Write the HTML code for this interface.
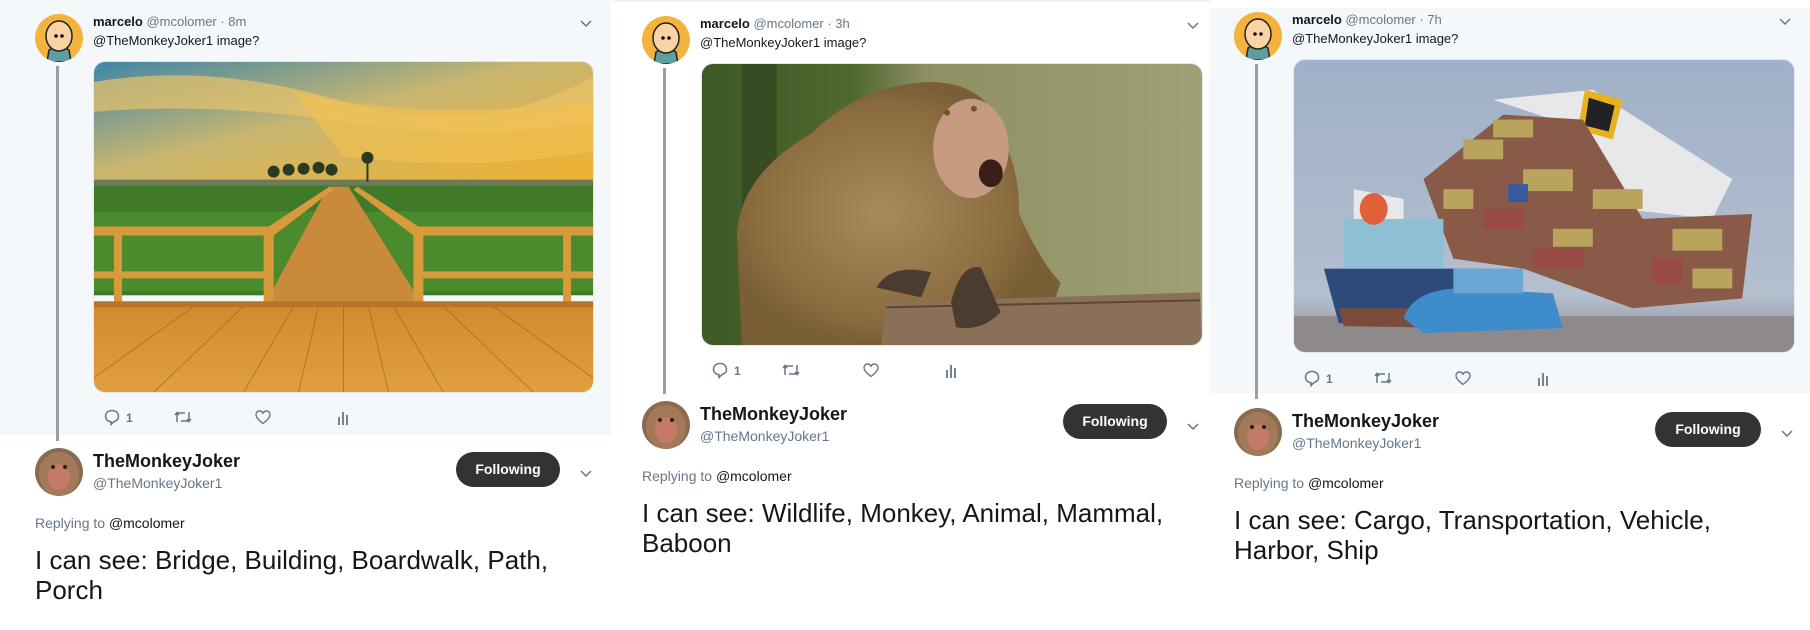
<!DOCTYPE html>
<html><head><meta charset="utf-8">
<style>
*{margin:0;padding:0;box-sizing:border-box}
body{width:1810px;height:630px;background:#fff;position:relative;overflow:hidden;font-family:"Liberation Sans",Arial,sans-serif;color:#14171a}
.bg{position:absolute;background:#f5f8fa}
.p{position:absolute;width:560px;height:600px}
.p>*{position:absolute}
.av{left:0;top:0;width:48px;height:48px;border-radius:50%;overflow:hidden}
.line{left:21px;width:3px;background:#9a9ea3;top:52px}
.hdr{left:58px;top:0;font-size:13px;line-height:16px;color:#657786;white-space:nowrap}
.hdr b{color:#14171a}
.t2{left:58px;top:19px;font-size:13px;line-height:16px;white-space:nowrap}
.img{left:58px;top:47px;width:502px;border-radius:12px;overflow:hidden;border:1px solid #e1e8ed}
.img svg{display:block;width:100%;height:100%}
.act{left:68px;height:18px;width:260px}
.act svg{position:absolute;top:0}
.act span{position:absolute;left:23px;top:3px;font-size:12px;font-weight:bold;color:#657786}
.av2{left:0;width:48px;height:48px;border-radius:50%;overflow:hidden}
.n2{left:58px;font-size:18px;font-weight:bold;line-height:22px;white-space:nowrap}
.h2{left:58px;font-size:14px;line-height:18px;color:#657786;white-space:nowrap}
.btn{left:421px;width:104px;height:35px;border-radius:18px;background:#333;color:#fff;font-weight:bold;font-size:14px;text-align:center;line-height:35px}
.chev{left:544px}
.rep{left:0;font-size:14px;line-height:18px;color:#657786;white-space:nowrap}
.rep i{font-style:normal;color:#14171a}
.txt{left:0;font-size:26px;line-height:30px;width:560px;color:#14171a}
</style></head><body>
<div class="bg" style="left:0;top:0;width:611px;height:435px"></div>
<div class="bg" style="left:1209px;top:8px;width:601px;height:385px"></div>
<div style="position:absolute;left:614px;top:0;width:596px;height:2px;background:#eef1f4"></div>

<!-- reusable svgs via templates inline -->
<!-- PANEL 1 -->
<div class="p" style="left:35px;top:14px">
  <div class="av"><svg viewBox="0 0 48 48" width="48" height="48"><rect width="48" height="48" fill="#f3b33d"/><path d="M12 48 L14 36 Q24 30 34 36 L36 48Z" fill="#5f9ea0" stroke="#222" stroke-width="1.5"/><ellipse cx="24" cy="22" rx="13" ry="15" fill="#f9d3a3" stroke="#222" stroke-width="1.5"/><circle cx="21" cy="22" r="1.8" fill="#111"/><circle cx="27" cy="22" r="1.8" fill="#111"/></svg></div>
  <div class="line" style="height:375px"></div>
  <div class="hdr"><b>marcelo</b> @mcolomer · 8m</div>
  <div class="chev" style="top:2px"><svg width="14" height="10" viewBox="0 0 14 10"><path d="M2 2 L7 7 L12 2" fill="none" stroke="#657786" stroke-width="1.5"/></svg></div>
  <div class="t2">@TheMonkeyJoker1 image?</div>
  <div class="img" style="height:332px;width:501px">
    <svg viewBox="0 0 500 331" preserveAspectRatio="none">
      <defs>
        <linearGradient id="sky1" x1="0" y1="0" x2="1" y2="1"><stop offset="0" stop-color="#3f86a8"/><stop offset=".45" stop-color="#c8b670"/><stop offset="1" stop-color="#f2b12c"/></linearGradient>
        <linearGradient id="deck1" x1="0" y1="0" x2="0" y2="1"><stop offset="0" stop-color="#d08c2c"/><stop offset="1" stop-color="#e0a040"/></linearGradient>
      </defs>
      <rect width="500" height="125" fill="url(#sky1)"/>
      <path d="M0 20 Q120 0 250 40 T500 15 L500 60 Q380 80 250 60 T0 50Z" fill="#e9c36a" opacity=".7"/>
      <path d="M200 30 Q320 60 500 40 L500 90 Q380 110 250 95 Z" fill="#f4c24e" opacity=".6"/>
      <rect y="118" width="500" height="10" fill="#6f7a58"/>
      <rect y="124" width="500" height="110" fill="#3f7a28"/>
      <rect y="150" width="500" height="80" fill="#4c8a2e"/>
      <g fill="#2a3a20"><circle cx="180" cy="110" r="6"/><circle cx="195" cy="108" r="6"/><circle cx="210" cy="107" r="6"/><circle cx="225" cy="106" r="6"/><circle cx="238" cy="108" r="6"/><circle cx="274" cy="96" r="6"/><rect x="273" y="96" width="2" height="24"/></g>
      <path d="M0 302 L0 331 L500 331 L500 302 Z" fill="url(#deck1)"/>
      <path d="M0 245 L500 245 L500 331 L0 331Z" fill="url(#deck1)"/>
      <path d="M235 125 L255 125 L330 245 L170 245Z" fill="#c98a3c"/>
      <g fill="#d89a3a">
        <rect x="0" y="165" width="175" height="9"/><rect x="0" y="210" width="175" height="7"/>
        <rect x="325" y="165" width="175" height="9"/><rect x="325" y="210" width="175" height="7"/>
        <path d="M175 165 L236 125 L240 128 L180 174Z"/><path d="M325 165 L264 125 L260 128 L320 174Z"/>
        <rect x="170" y="165" width="10" height="80"/><rect x="320" y="165" width="10" height="80"/>
        <rect x="20" y="165" width="8" height="80"/><rect x="470" y="165" width="8" height="80"/>
      </g>
      <rect x="0" y="240" width="500" height="6" fill="#b87428"/>
      <g stroke="#9a5d1e" stroke-width="1" opacity=".6">
        <path d="M250 245 L250 331M200 245 L150 331M150 245 L60 331M100 245 L-20 331M300 245 L350 331M350 245 L440 331M400 245 L520 331M225 245 L205 331M275 245 L295 331"/>
      </g>
    </svg>
  </div>
  <div class="act" style="top:394px">
    <svg style="left:0" width="18" height="18" viewBox="0 0 18 18"><path d="M9 2.5C5 2.5 2.5 5 2.5 8.3c0 3 2.3 5.3 5.5 5.4v2.8l3-2.9c2.7-.8 4.5-2.7 4.5-5.3C15.5 5 13 2.5 9 2.5z" fill="none" stroke="#657786" stroke-width="1.5"/></svg>
    <span>1</span>
    <svg style="left:70px" width="20" height="18" viewBox="0 0 20 18"><path d="M4 14V5h8M2 7l2-2.5L6 7M16 4v9H8M14 11l2 2.5 2-2.5" fill="none" stroke="#657786" stroke-width="1.5"/></svg>
    <svg style="left:151px" width="18" height="18" viewBox="0 0 18 18"><path d="M9 15.5C4 11.5 2 9.3 2 6.5 2 4.3 3.7 3 5.6 3 7.2 3 8.3 4 9 5.2 9.7 4 10.8 3 12.4 3 14.3 3 16 4.3 16 6.5c0 2.8-2 5-7 9z" fill="none" stroke="#657786" stroke-width="1.4"/></svg>
    <svg style="left:232px" width="16" height="18" viewBox="0 0 16 18"><path d="M4 9v8M8 4v13M12 7v10" stroke="#657786" stroke-width="1.8"/></svg>
  </div>
  <div class="av2" style="top:434px"><svg viewBox="0 0 48 48" width="48" height="48"><rect width="48" height="48" fill="#8a6b50"/><ellipse cx="24" cy="26" rx="20" ry="22" fill="#a27a5a"/><ellipse cx="24" cy="29" rx="11" ry="13" fill="#c57a66"/><circle cx="18" cy="19" r="2" fill="#222"/><circle cx="30" cy="19" r="2" fill="#222"/></svg></div>
  <div class="n2" style="top:436px">TheMonkeyJoker</div>
  <div class="h2" style="top:460px">@TheMonkeyJoker1</div>
  <div class="btn" style="top:438px">Following</div>
  <div class="chev" style="top:452px"><svg width="14" height="10" viewBox="0 0 14 10"><path d="M2 2 L7 7 L12 2" fill="none" stroke="#657786" stroke-width="1.5"/></svg></div>
  <div class="rep" style="top:500px">Replying to <i>@mcolomer</i></div>
  <div class="txt" style="top:531px">I can see: Bridge, Building, Boardwalk, Path, Porch</div>
</div>

<!-- PANEL 2 -->
<div class="p" style="left:642px;top:16px">
  <div class="av"><svg viewBox="0 0 48 48" width="48" height="48"><rect width="48" height="48" fill="#f3b33d"/><path d="M12 48 L14 36 Q24 30 34 36 L36 48Z" fill="#5f9ea0" stroke="#222" stroke-width="1.5"/><ellipse cx="24" cy="22" rx="13" ry="15" fill="#f9d3a3" stroke="#222" stroke-width="1.5"/><circle cx="21" cy="22" r="1.8" fill="#111"/><circle cx="27" cy="22" r="1.8" fill="#111"/></svg></div>
  <div class="line" style="height:326px"></div>
  <div class="hdr"><b>marcelo</b> @mcolomer · 3h</div>
  <div class="chev" style="top:2px"><svg width="14" height="10" viewBox="0 0 14 10"><path d="M2 2 L7 7 L12 2" fill="none" stroke="#657786" stroke-width="1.5"/></svg></div>
  <div class="t2">@TheMonkeyJoker1 image?</div>
  <div class="img" style="height:283px;left:59px">
    <svg viewBox="0 0 502 283" preserveAspectRatio="none">
      <defs>
        <radialGradient id="mk" cx=".45" cy=".5" r=".5"><stop offset="0" stop-color="#a88a5c"/><stop offset=".8" stop-color="#8a6c3e"/><stop offset="1" stop-color="#7a5e36"/></radialGradient>
        <linearGradient id="bk2" x1="0" y1="0" x2="1" y2="0"><stop offset="0" stop-color="#3d5a25"/><stop offset=".3" stop-color="#50672f"/><stop offset=".45" stop-color="#8f8f66"/><stop offset="1" stop-color="#a0a074"/></linearGradient>
      </defs>
      <rect width="502" height="283" fill="url(#bk2)"/>
      <rect x="40" y="0" width="35" height="283" fill="#2f3f1e" opacity=".6"/>
      <path d="M40 283 L35 170 Q40 110 110 70 Q160 20 230 18 Q290 20 300 70 Q320 110 318 150 Q340 200 360 220 L340 283Z" fill="url(#mk)"/>
      <ellipse cx="270" cy="85" rx="38" ry="50" fill="#c59a80"/>
      <ellipse cx="290" cy="110" rx="12" ry="14" fill="#3a1e18"/>
      <circle cx="246" cy="49" r="3" fill="#6b5a20"/><circle cx="273" cy="45" r="3" fill="#6b5a20"/>
      <path d="M185 240 L500 230 L502 283 L180 283Z" fill="#8a7056"/>
      <path d="M185 245 L500 238" stroke="#5a4634" stroke-width="2"/>
      <path d="M250 240 Q260 200 280 205 L300 250 Q280 270 255 265Z" fill="#4a3c30"/>
      <path d="M175 225 Q190 200 230 210 L220 235Z" fill="#4a3c30"/>
    </svg>
  </div>
  <div class="act" style="top:345px;left:69px">
    <svg style="left:0" width="18" height="18" viewBox="0 0 18 18"><path d="M9 2.5C5 2.5 2.5 5 2.5 8.3c0 3 2.3 5.3 5.5 5.4v2.8l3-2.9c2.7-.8 4.5-2.7 4.5-5.3C15.5 5 13 2.5 9 2.5z" fill="none" stroke="#657786" stroke-width="1.5"/></svg>
    <span>1</span>
    <svg style="left:70px" width="20" height="18" viewBox="0 0 20 18"><path d="M4 14V5h8M2 7l2-2.5L6 7M16 4v9H8M14 11l2 2.5 2-2.5" fill="none" stroke="#657786" stroke-width="1.5"/></svg>
    <svg style="left:151px" width="18" height="18" viewBox="0 0 18 18"><path d="M9 15.5C4 11.5 2 9.3 2 6.5 2 4.3 3.7 3 5.6 3 7.2 3 8.3 4 9 5.2 9.7 4 10.8 3 12.4 3 14.3 3 16 4.3 16 6.5c0 2.8-2 5-7 9z" fill="none" stroke="#657786" stroke-width="1.4"/></svg>
    <svg style="left:232px" width="16" height="18" viewBox="0 0 16 18"><path d="M4 9v8M8 4v13M12 7v10" stroke="#657786" stroke-width="1.8"/></svg>
  </div>
  <div class="av2" style="top:385px"><svg viewBox="0 0 48 48" width="48" height="48"><rect width="48" height="48" fill="#8a6b50"/><ellipse cx="24" cy="26" rx="20" ry="22" fill="#a27a5a"/><ellipse cx="24" cy="29" rx="11" ry="13" fill="#c57a66"/><circle cx="18" cy="19" r="2" fill="#222"/><circle cx="30" cy="19" r="2" fill="#222"/></svg></div>
  <div class="n2" style="top:387px">TheMonkeyJoker</div>
  <div class="h2" style="top:411px">@TheMonkeyJoker1</div>
  <div class="btn" style="top:388px">Following</div>
  <div class="chev" style="top:403px"><svg width="14" height="10" viewBox="0 0 14 10"><path d="M2 2 L7 7 L12 2" fill="none" stroke="#657786" stroke-width="1.5"/></svg></div>
  <div class="rep" style="top:451px">Replying to <i>@mcolomer</i></div>
  <div class="txt" style="top:482px">I can see: Wildlife, Monkey, Animal, Mammal, Baboon</div>
</div>

<!-- PANEL 3 -->
<div class="p" style="left:1234px;top:12px">
  <div class="av"><svg viewBox="0 0 48 48" width="48" height="48"><rect width="48" height="48" fill="#f3b33d"/><path d="M12 48 L14 36 Q24 30 34 36 L36 48Z" fill="#5f9ea0" stroke="#222" stroke-width="1.5"/><ellipse cx="24" cy="22" rx="13" ry="15" fill="#f9d3a3" stroke="#222" stroke-width="1.5"/><circle cx="21" cy="22" r="1.8" fill="#111"/><circle cx="27" cy="22" r="1.8" fill="#111"/></svg></div>
  <div class="line" style="height:335px"></div>
  <div class="hdr"><b>marcelo</b> @mcolomer · 7h</div>
  <div class="chev" style="top:2px"><svg width="14" height="10" viewBox="0 0 14 10"><path d="M2 2 L7 7 L12 2" fill="none" stroke="#657786" stroke-width="1.5"/></svg></div>
  <div class="t2">@TheMonkeyJoker1 image?</div>
  <div class="img" style="height:294px;top:47px;left:59px">
    <svg viewBox="0 0 502 294" preserveAspectRatio="none">
      <defs><linearGradient id="sk3" x1="0" y1="0" x2="0" y2="1"><stop offset="0" stop-color="#9fb0c8"/><stop offset=".8" stop-color="#b4bfcf"/><stop offset="1" stop-color="#8f9096"/></linearGradient></defs>
      <rect width="502" height="294" fill="url(#sk3)"/>
      <rect y="258" width="502" height="36" fill="#8e8a8c"/>
      <path d="M200 40 L300 30 L440 120 L420 160 L330 150 L260 60Z" fill="#e8e8ea"/>
      <path d="M292 30 L330 40 L320 80 L285 70Z" fill="#e6b21e"/>
      <path d="M296 38 L322 46 L316 72 L292 66Z" fill="#222"/>
      <path d="M130 120 L210 55 L290 60 L350 160 L460 155 L450 240 L340 250 L230 210 L160 200Z" fill="#8a5a48"/>
      <g fill="#b8a45c"><rect x="170" y="80" width="40" height="20"/><rect x="230" y="110" width="50" height="22"/><rect x="300" y="130" width="50" height="20"/><rect x="380" y="170" width="50" height="22"/><rect x="400" y="210" width="40" height="20"/><rect x="150" y="130" width="30" height="20"/><rect x="260" y="170" width="40" height="18"/><rect x="200" y="60" width="40" height="18"/></g>
      <g fill="#9a4a44"><rect x="190" y="150" width="40" height="20"/><rect x="240" y="190" width="50" height="20"/><rect x="360" y="200" width="30" height="25"/></g>
      <rect x="215" y="125" width="20" height="18" fill="#3a5aa0"/>
      <path d="M30 210 L190 210 L180 265 L45 265Z" fill="#2e4a7c"/>
      <path d="M45 250 L180 250 L175 270 L50 268Z" fill="#7a4a3a"/>
      <path d="M50 160 L150 160 L150 210 L50 210Z" fill="#8ec0d4"/>
      <path d="M60 130 L110 140 L110 160 L60 160Z" fill="#e8e8ea"/>
      <ellipse cx="80" cy="150" rx="14" ry="16" fill="#e0603a"/>
      <path d="M110 260 Q120 230 170 230 L260 235 L270 270 L130 275Z" fill="#3f8ccc"/>
      <path d="M160 210 L230 210 L230 235 L160 235Z" fill="#6aa6d4"/>
    </svg>
  </div>
  <div class="act" style="top:357px;left:69px">
    <svg style="left:0" width="18" height="18" viewBox="0 0 18 18"><path d="M9 2.5C5 2.5 2.5 5 2.5 8.3c0 3 2.3 5.3 5.5 5.4v2.8l3-2.9c2.7-.8 4.5-2.7 4.5-5.3C15.5 5 13 2.5 9 2.5z" fill="none" stroke="#657786" stroke-width="1.5"/></svg>
    <span>1</span>
    <svg style="left:70px" width="20" height="18" viewBox="0 0 20 18"><path d="M4 14V5h8M2 7l2-2.5L6 7M16 4v9H8M14 11l2 2.5 2-2.5" fill="none" stroke="#657786" stroke-width="1.5"/></svg>
    <svg style="left:151px" width="18" height="18" viewBox="0 0 18 18"><path d="M9 15.5C4 11.5 2 9.3 2 6.5 2 4.3 3.7 3 5.6 3 7.2 3 8.3 4 9 5.2 9.7 4 10.8 3 12.4 3 14.3 3 16 4.3 16 6.5c0 2.8-2 5-7 9z" fill="none" stroke="#657786" stroke-width="1.4"/></svg>
    <svg style="left:232px" width="16" height="18" viewBox="0 0 16 18"><path d="M4 9v8M8 4v13M12 7v10" stroke="#657786" stroke-width="1.8"/></svg>
  </div>
  <div class="av2" style="top:396px"><svg viewBox="0 0 48 48" width="48" height="48"><rect width="48" height="48" fill="#8a6b50"/><ellipse cx="24" cy="26" rx="20" ry="22" fill="#a27a5a"/><ellipse cx="24" cy="29" rx="11" ry="13" fill="#c57a66"/><circle cx="18" cy="19" r="2" fill="#222"/><circle cx="30" cy="19" r="2" fill="#222"/></svg></div>
  <div class="n2" style="top:398px">TheMonkeyJoker</div>
  <div class="h2" style="top:422px">@TheMonkeyJoker1</div>
  <div class="btn" style="top:400px;width:106px">Following</div>
  <div class="chev" style="top:414px;left:546px"><svg width="14" height="10" viewBox="0 0 14 10"><path d="M2 2 L7 7 L12 2" fill="none" stroke="#657786" stroke-width="1.5"/></svg></div>
  <div class="rep" style="top:462px">Replying to <i>@mcolomer</i></div>
  <div class="txt" style="top:493px">I can see: Cargo, Transportation, Vehicle, Harbor, Ship</div>
</div>
</body></html>
